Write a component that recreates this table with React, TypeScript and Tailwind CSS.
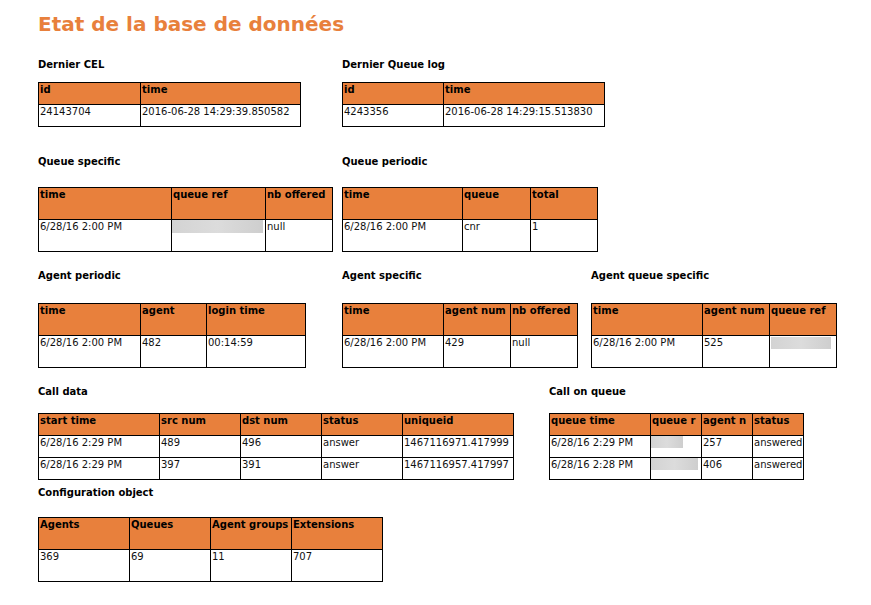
type Blur = { blur: string };
type Cell = string | Blur;

interface Table {
  title: string;
  box: string;
  cols: string[];
  head: string[];
  headH: string;
  rowH: string;
  rows: Cell[][];
  gap: string;
}

const orange = 'bg-[#e8803c]';

function DataTable({ t }: { t: Table }) {
  return (
    <div className={t.box}>
      <h4 className={`text-[10px] leading-[12px] font-bold text-black ${t.gap}`}>{t.title}</h4>
      <div className="flex w-fit flex-col border-l border-t border-black">
        <div className={`flex ${orange}`}>
          {t.head.map((h, i) => (
            <div
              key={i}
              className={`${t.cols[i]} ${t.headH} shrink-0 overflow-hidden whitespace-nowrap border-r border-b border-black px-px pt-px text-[10px] leading-[12px] font-bold text-black`}
            >
              {h}
            </div>
          ))}
        </div>
        {t.rows.map((row, r) => (
          <div key={r} className="flex bg-white">
            {row.map((c, i) => (
              <div
                key={i}
                className={`${t.cols[i]} ${t.rowH} shrink-0 overflow-hidden whitespace-nowrap border-r border-b border-black text-[10px] leading-[12px] text-[#111]`}
              >
                {typeof c === 'string' ? (
                  <div className="px-px pt-px">{c}</div>
                ) : (
                  <div className={`bg-linear-to-r from-[#d3d3d3] via-[#dcdcdc] to-[#cecece] ${c.blur}`} />
                )}
              </div>
            ))}
          </div>
        ))}
      </div>
    </div>
  );
}

const row1: Table[] = [
  {
    title: 'Dernier CEL',
    box: 'w-[304px]',
    cols: ['w-[102px]', 'w-[160px]'],
    head: ['id', 'time'],
    headH: 'h-[22px]',
    rowH: 'h-[22px]',
    rows: [['24143704', '2016-06-28 14:29:39.850582']],
    gap: 'mb-[11px]',
  },
  {
    title: 'Dernier Queue log',
    box: 'w-[262px]',
    cols: ['w-[101px]', 'w-[161px]'],
    head: ['id', 'time'],
    headH: 'h-[22px]',
    rowH: 'h-[22px]',
    rows: [['4243356', '2016-06-28 14:29:15.513830']],
    gap: 'mb-[11px]',
  },
];

const row2: Table[] = [
  {
    title: 'Queue specific',
    box: 'w-[304px]',
    cols: ['w-[133px]', 'w-[94px]', 'w-[67px]'],
    head: ['time', 'queue ref', 'nb offered'],
    headH: 'h-[32px]',
    rowH: 'h-[32px]',
    rows: [['6/28/16 2:00 PM', { blur: 'w-[91px] h-[13px]' }, 'null']],
    gap: 'mb-[19px]',
  },
  {
    title: 'Queue periodic',
    box: 'w-[256px]',
    cols: ['w-[120px]', 'w-[68px]', 'w-[67px]'],
    head: ['time', 'queue', 'total'],
    headH: 'h-[32px]',
    rowH: 'h-[32px]',
    rows: [['6/28/16 2:00 PM', 'cnr', '1']],
    gap: 'mb-[19px]',
  },
];

const row3: Table[] = [
  {
    title: 'Agent periodic',
    box: 'w-[304px]',
    cols: ['w-[102px]', 'w-[66px]', 'w-[99px]'],
    head: ['time', 'agent', 'login time'],
    headH: 'h-[32px]',
    rowH: 'h-[32px]',
    rows: [['6/28/16 2:00 PM', '482', '00:14:59']],
    gap: 'mb-[21px]',
  },
  {
    title: 'Agent specific',
    box: 'w-[249px]',
    cols: ['w-[101px]', 'w-[67px]', 'w-[67px]'],
    head: ['time', 'agent num', 'nb offered'],
    headH: 'h-[32px]',
    rowH: 'h-[32px]',
    rows: [['6/28/16 2:00 PM', '429', 'null']],
    gap: 'mb-[21px]',
  },
  {
    title: 'Agent queue specific',
    box: 'w-[246px]',
    cols: ['w-[111px]', 'w-[67px]', 'w-[67px]'],
    head: ['time', 'agent num', 'queue ref'],
    headH: 'h-[32px]',
    rowH: 'h-[32px]',
    rows: [['6/28/16 2:00 PM', '525', { blur: 'ml-px mt-px w-[60px] h-[12px]' }]],
    gap: 'mb-[21px]',
  },
];

const row4: Table[] = [
  {
    title: 'Call data',
    box: 'w-[511px]',
    cols: ['w-[121px]', 'w-[81px]', 'w-[81px]', 'w-[81px]', 'w-[111px]'],
    head: ['start time', 'src num', 'dst num', 'status', 'uniqueid'],
    headH: 'h-[22px]',
    rowH: 'h-[22px]',
    rows: [
      ['6/28/16 2:29 PM', '489', '496', 'answer', '1467116971.417999'],
      ['6/28/16 2:29 PM', '397', '391', 'answer', '1467116957.417997'],
    ],
    gap: 'mb-[15px]',
  },
  {
    title: 'Call on queue',
    box: 'w-[255px]',
    cols: ['w-[101px]', 'w-[51px]', 'w-[51px]', 'w-[51px]'],
    head: ['queue time', 'queue r', 'agent n', 'status'],
    headH: 'h-[22px]',
    rowH: 'h-[22px]',
    rows: [
      ['6/28/16 2:29 PM', { blur: 'w-[32px] h-[12px]' }, '257', 'answered'],
      ['6/28/16 2:28 PM', { blur: 'w-[47px] h-[12px]' }, '406', 'answered'],
    ],
    gap: 'mb-[15px]',
  },
];

const config: Table = {
  title: 'Configuration object',
  box: 'w-[345px]',
  cols: ['w-[91px]', 'w-[81px]', 'w-[81px]', 'w-[91px]'],
  head: ['Agents', 'Queues', 'Agent groups', 'Extensions'],
  headH: 'h-[32px]',
  rowH: 'h-[32px]',
  rows: [['369', '69', '11', '707']],
  gap: 'mb-[18px]',
};

function Row({ tables, className }: { tables: Table[]; className: string }) {
  return (
    <div className={`flex items-start ${className}`}>
      {tables.map(t => (
        <DataTable key={t.title} t={t} />
      ))}
    </div>
  );
}

export default function App() {
  return (
    <div className="min-h-[605px] w-[871px] bg-white pl-[38px] pt-[13px] pb-4 font-['DejaVu_Sans',sans-serif]">
      <h1 className="text-[20px] leading-[23px] font-bold text-[#e8803c]">Etat de la base de données</h1>
      <Row tables={row1} className="mt-[23px]" />
      <Row tables={row2} className="mt-[29px]" />
      <Row tables={row3} className="mt-[18px]" />
      <Row tables={row4} className="mt-[18px]" />
      <Row tables={[config]} className="mt-[7px]" />
    </div>
  );
}
